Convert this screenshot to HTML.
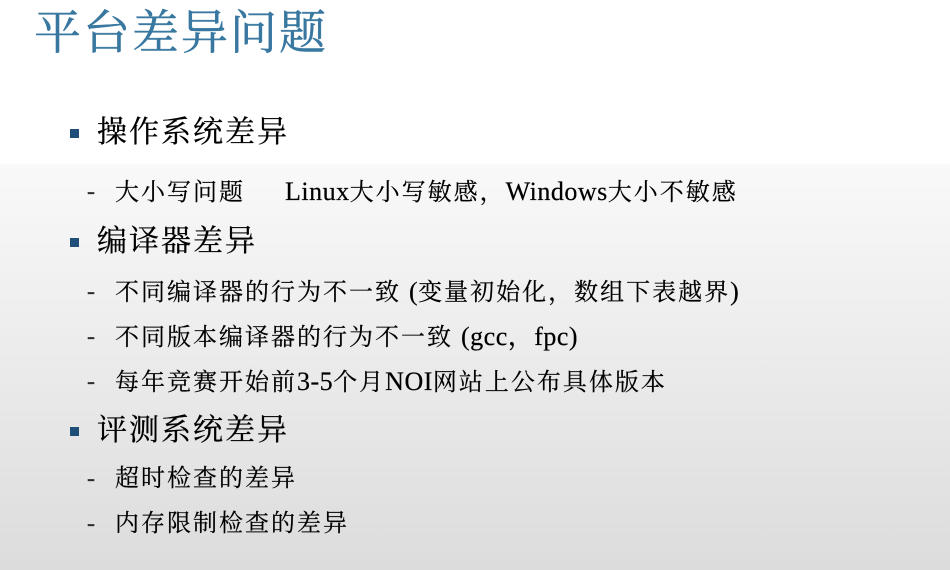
<!DOCTYPE html>
<html><head><meta charset="utf-8"><style>
html,body{margin:0;padding:0}
body{width:950px;height:570px;overflow:hidden;position:relative;font-family:"Liberation Serif","Noto Serif CJK SC",serif;color:#000;
background:linear-gradient(to bottom,#fff 0,#fff 163px,#f9f9f9 165px,#dcdcdc 570px);}
.t{position:absolute;left:34px;top:5px;font-size:47px;line-height:58px;color:#3877a0;letter-spacing:2px;white-space:nowrap;-webkit-text-stroke:0.4px #3877a0}
.h{position:absolute;left:97px;font-size:30px;line-height:40px;letter-spacing:2px;white-space:nowrap;-webkit-text-stroke:0.3px #000}
.h:before{content:"";position:absolute;left:-27px;top:16px;width:9px;height:9px;background:#1f4e79}
.s{position:absolute;left:115px;font-size:24px;line-height:32px;letter-spacing:2px;white-space:nowrap;-webkit-text-stroke:0.2px #000}
.s:before{content:"-";position:absolute;left:-28px;top:0;color:#333}
.l{letter-spacing:0.5px;font-size:26px}
</style></head><body>
<div class="t">平台差异问题</div>
<div class="h" style="top:113px">操作系统差异</div>
<div class="s" style="top:176px">大小写问题&nbsp;&nbsp;&nbsp;&nbsp;&nbsp;<span class="l">Linux</span>大小写敏感，<span class="l">Windows</span>大小不敏感</div>
<div class="h" style="top:222px">编译器差异</div>
<div class="s" style="top:276px">不同编译器的行为不一致 <span class="l">(</span>变量初始化，数组下表越界<span class="l">)</span></div>
<div class="s" style="top:321px">不同版本编译器的行为不一致 <span class="l">(gcc，fpc)</span></div>
<div class="s" style="top:366px">每年竞赛开始前<span class="l">3-5</span>个月<span class="l">NOI</span>网站上公布具体版本</div>
<div class="h" style="top:411px">评测系统差异</div>
<div class="s" style="top:463px">超时检查的差异</div>
<div class="s" style="top:508px">内存限制检查的差异</div>
</body></html>
